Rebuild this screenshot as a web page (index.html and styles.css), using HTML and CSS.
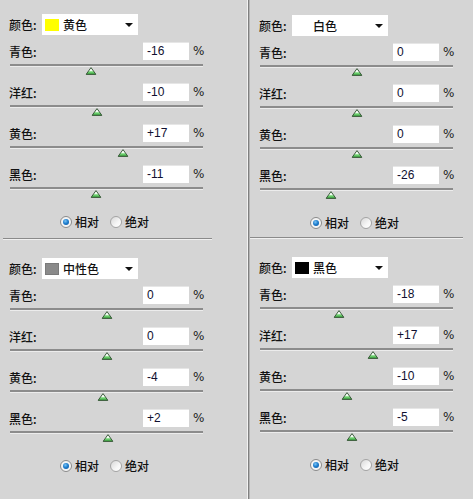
FILE: index.html
```html
<!DOCTYPE html>
<html lang="zh">
<head>
<meta charset="utf-8">
<title>可选颜色</title>
<link rel="stylesheet" href="styles.css">
</head>
<body>
<svg width="0" height="0" class="defs">
  <defs>
    <linearGradient id="tg" x1="0" y1="0" x2="0" y2="1">
      <stop offset="0" stop-color="#ffffff"/>
      <stop offset="0.45" stop-color="#f4fff4"/>
      <stop offset="0.6" stop-color="#7fdc7f"/>
      <stop offset="1" stop-color="#2f9a35"/>
    </linearGradient>
    <symbol id="thumb" viewBox="0 0 11 8">
      <polygon points="5.5,0.6 10.4,7.4 0.6,7.4" fill="url(#tg)" stroke="#3b5a3b" stroke-width="1" stroke-linejoin="round"/>
    </symbol>
  </defs>
</svg>
<div class="page">
  <div class="col col-left">
    <section class="panel panel-top">
      <div class="color-row"><span class="lbl">颜色:</span><div class="select"><span class="swatch sw-yellow"></span><span class="sel-text">黄色</span><span class="arrow"></span></div></div>
      <div class="sliders">
        <div class="slider-row"><div class="head"><span class="lbl">青色:</span><span class="num">-16</span><span class="pct">%</span></div><div class="track"><span class="thumb" style="left:42%"><svg width="11" height="8"><use href="#thumb"/></svg></span></div></div>
        <div class="slider-row"><div class="head"><span class="lbl">洋红:</span><span class="num">-10</span><span class="pct">%</span></div><div class="track"><span class="thumb" style="left:45%"><svg width="11" height="8"><use href="#thumb"/></svg></span></div></div>
        <div class="slider-row"><div class="head"><span class="lbl">黄色:</span><span class="num">+17</span><span class="pct">%</span></div><div class="track"><span class="thumb" style="left:58.5%"><svg width="11" height="8"><use href="#thumb"/></svg></span></div></div>
        <div class="slider-row"><div class="head"><span class="lbl">黑色:</span><span class="num">-11</span><span class="pct">%</span></div><div class="track"><span class="thumb" style="left:44.5%"><svg width="11" height="8"><use href="#thumb"/></svg></span></div></div>
      </div>
      <div class="radios"><span class="radio on"></span><span class="rlbl">相对</span><span class="radio"></span><span class="rlbl">绝对</span></div>
    </section>
    <div class="hr hr-left"></div>
    <section class="panel panel-bottom">
      <div class="color-row"><span class="lbl">颜色:</span><div class="select"><span class="swatch sw-gray"></span><span class="sel-text">中性色</span><span class="arrow"></span></div></div>
      <div class="sliders">
        <div class="slider-row"><div class="head"><span class="lbl">青色:</span><span class="num">0</span><span class="pct">%</span></div><div class="track"><span class="thumb" style="left:50%"><svg width="11" height="8"><use href="#thumb"/></svg></span></div></div>
        <div class="slider-row"><div class="head"><span class="lbl">洋红:</span><span class="num">0</span><span class="pct">%</span></div><div class="track"><span class="thumb" style="left:50%"><svg width="11" height="8"><use href="#thumb"/></svg></span></div></div>
        <div class="slider-row"><div class="head"><span class="lbl">黄色:</span><span class="num">-4</span><span class="pct">%</span></div><div class="track"><span class="thumb" style="left:48%"><svg width="11" height="8"><use href="#thumb"/></svg></span></div></div>
        <div class="slider-row"><div class="head"><span class="lbl">黑色:</span><span class="num">+2</span><span class="pct">%</span></div><div class="track"><span class="thumb" style="left:51%"><svg width="11" height="8"><use href="#thumb"/></svg></span></div></div>
      </div>
      <div class="radios"><span class="radio on"></span><span class="rlbl">相对</span><span class="radio"></span><span class="rlbl">绝对</span></div>
    </section>
  </div>
  <div class="vline"></div>
  <div class="col col-right">
    <section class="panel panel-top">
      <div class="color-row"><span class="lbl">颜色:</span><div class="select"><span class="swatch sw-white"></span><span class="sel-text">白色</span><span class="arrow"></span></div></div>
      <div class="sliders">
        <div class="slider-row"><div class="head"><span class="lbl">青色:</span><span class="num">0</span><span class="pct">%</span></div><div class="track"><span class="thumb" style="left:50%"><svg width="11" height="8"><use href="#thumb"/></svg></span></div></div>
        <div class="slider-row"><div class="head"><span class="lbl">洋红:</span><span class="num">0</span><span class="pct">%</span></div><div class="track"><span class="thumb" style="left:50%"><svg width="11" height="8"><use href="#thumb"/></svg></span></div></div>
        <div class="slider-row"><div class="head"><span class="lbl">黄色:</span><span class="num">0</span><span class="pct">%</span></div><div class="track"><span class="thumb" style="left:50%"><svg width="11" height="8"><use href="#thumb"/></svg></span></div></div>
        <div class="slider-row"><div class="head"><span class="lbl">黑色:</span><span class="num">-26</span><span class="pct">%</span></div><div class="track"><span class="thumb" style="left:37%"><svg width="11" height="8"><use href="#thumb"/></svg></span></div></div>
      </div>
      <div class="radios"><span class="radio on"></span><span class="rlbl">相对</span><span class="radio"></span><span class="rlbl">绝对</span></div>
    </section>
    <div class="hr hr-right"></div>
    <section class="panel panel-bottom">
      <div class="color-row"><span class="lbl">颜色:</span><div class="select"><span class="swatch sw-black"></span><span class="sel-text">黑色</span><span class="arrow"></span></div></div>
      <div class="sliders">
        <div class="slider-row"><div class="head"><span class="lbl">青色:</span><span class="num">-18</span><span class="pct">%</span></div><div class="track"><span class="thumb" style="left:41%"><svg width="11" height="8"><use href="#thumb"/></svg></span></div></div>
        <div class="slider-row"><div class="head"><span class="lbl">洋红:</span><span class="num">+17</span><span class="pct">%</span></div><div class="track"><span class="thumb" style="left:58.5%"><svg width="11" height="8"><use href="#thumb"/></svg></span></div></div>
        <div class="slider-row"><div class="head"><span class="lbl">黄色:</span><span class="num">-10</span><span class="pct">%</span></div><div class="track"><span class="thumb" style="left:45%"><svg width="11" height="8"><use href="#thumb"/></svg></span></div></div>
        <div class="slider-row"><div class="head"><span class="lbl">黑色:</span><span class="num">-5</span><span class="pct">%</span></div><div class="track"><span class="thumb" style="left:47.5%"><svg width="11" height="8"><use href="#thumb"/></svg></span></div></div>
      </div>
      <div class="radios"><span class="radio on"></span><span class="rlbl">相对</span><span class="radio"></span><span class="rlbl">绝对</span></div>
    </section>
  </div>
</div>
</body>
</html>
```

FILE: styles.css
```css
* { box-sizing: border-box; }
html, body { margin: 0; padding: 0; }
body {
  background: #d5d5d5;
  color: #111;
  font-family: "Noto Sans CJK SC", "DejaVu Sans", sans-serif;
  font-size: 12px;
  width: 473px;
  height: 499px;
  overflow: hidden;
}
.defs { position: absolute; width: 0; height: 0; }

.page {
  display: grid;
  grid-template-columns: 247px 3px 223px;
  height: 499px;
}
.col { display: flex; flex-direction: column; }

.vline {
  border-left: 1px solid #f2f2f2;
  background: #808080;
  border-right: 1px solid #b4b4b4;
  width: 3px;
}

.panel { display: flex; flex-direction: column; }
.col-left .panel-top { height: 238px; padding-top: 14px; }
.col-right .panel-top { height: 237px; padding-top: 15px; }
.panel-bottom { padding-top: 18px; }

.hr {
  height: 2px;
  border-top: 1px solid #8a8a8a;
  border-bottom: 1px solid #f0f0f0;
}
.hr-left { margin-left: 3px; width: 209px; }
.hr-right { margin-left: 0; width: 213px; }

.color-row {
  display: flex;
  align-items: center;
  height: 21px;
  padding-left: 9px;
}
.lbl { line-height: 16px; white-space: nowrap; font-weight: 500; }
.color-row .lbl { width: 33px; }
.select {
  width: 96px;
  height: 21px;
  background: #fff;
  display: flex;
  align-items: center;
  padding-left: 3px;
}
.swatch { width: 14px; height: 12px; margin-right: 4px; flex: none; }
.sw-yellow { background: #ffff00; }
.sw-gray { background: #8a8a8a; border: 1px solid #7a7a7a; }
.sw-white { background: #ffffff; }
.sw-black { background: #000000; }
.sel-text { line-height: 16px; font-weight: 500; }
.arrow {
  margin-left: auto;
  margin-right: 5px;
  width: 0;
  height: 0;
  border-left: 4px solid transparent;
  border-right: 4px solid transparent;
  border-top: 4px solid #111;
}

.sliders { margin-top: 7px; display: flex; flex-direction: column; }
.slider-row { height: 41px; }
.head {
  display: flex;
  align-items: flex-end;
  height: 18px;
  padding-left: 9px;
}
.head .lbl { width: 134px; }
.num {
  width: 46px;
  height: 18px;
  background: #fff;
  border-top: 1px solid #e6e6e6;
  padding-left: 4px;
  line-height: 17px;
  font-family: "Liberation Sans", sans-serif;
  font-size: 12px;
  color: #101030;
}
.pct {
  margin-left: 4px;
  align-self: center;
  font-family: "DejaVu Sans", sans-serif;
  font-size: 12px;
  color: #222;
}
.track {
  position: relative;
  margin: 4px 0 0 10px;
  width: 193px;
  height: 3px;
  background: #8c8c8c;
  border-bottom: 1px solid #ececec;
}
.thumb {
  position: absolute;
  top: 3px;
  width: 11px;
  height: 8px;
  transform: translateX(-50%);
  display: block;
}
.thumb svg { display: block; }

.radios {
  display: flex;
  align-items: center;
  height: 14px;
  margin-top: 9px;
  padding-left: 60px;
}
.radio {
  width: 12px;
  height: 12px;
  border-radius: 50%;
  border: 1px solid #a4a4a4;
  background: linear-gradient(135deg, #d8d8d8 0%, #f6f6f6 60%, #ffffff 100%);
  flex: none;
  position: relative;
}
.radio.on {
  border-color: #8a8a8a;
  background: #f4f4f4;
}
.radio.on::after {
  content: "";
  position: absolute;
  left: 2px;
  top: 2px;
  width: 6px;
  height: 6px;
  border-radius: 50%;
  background: radial-gradient(circle at 40% 35%, #7cc4f4 0%, #2080d0 45%, #0c4f96 100%);
}
.rlbl { margin-left: 3px; margin-right: 11px; line-height: 16px; font-weight: 500; }
```
